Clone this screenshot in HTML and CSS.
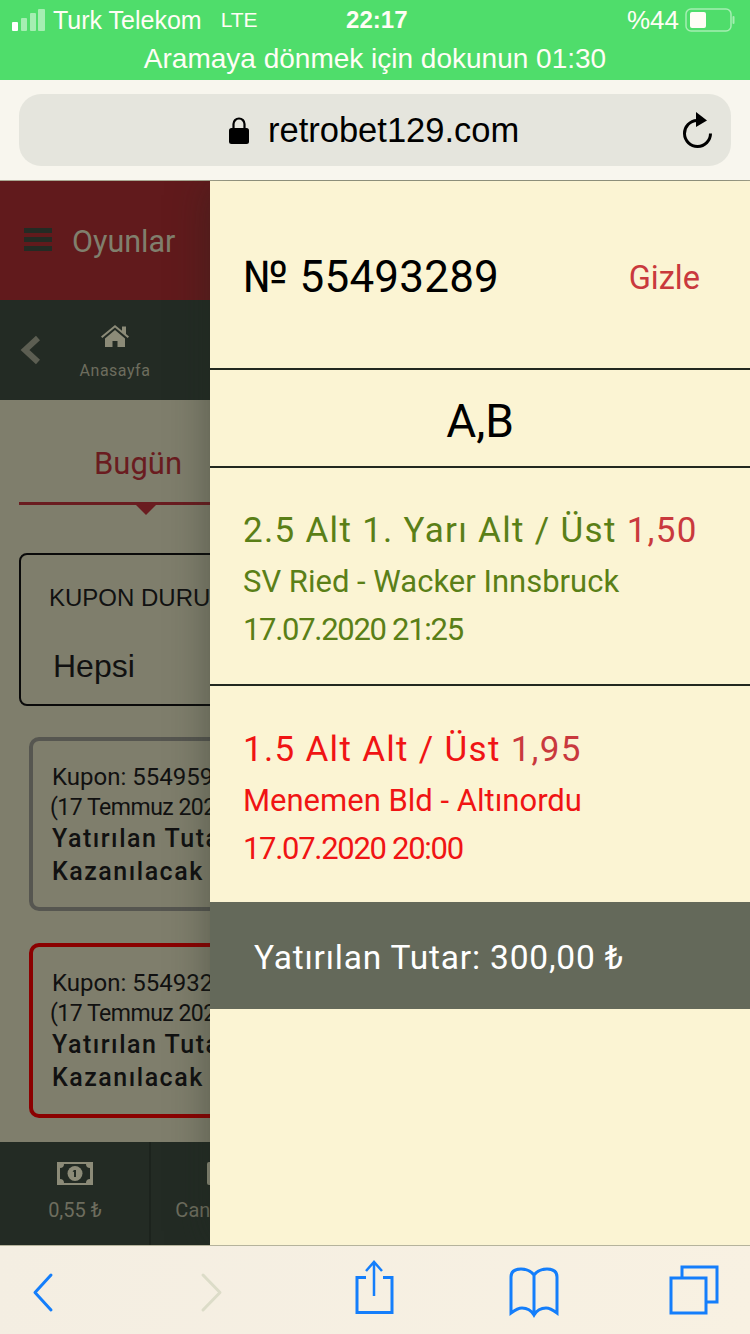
FILE: index.html
```html
<!DOCTYPE html>
<html>
<head>
	<title>Kupon</title>
	<link rel="stylesheet" href="styles.css">
</head>
<body>
	<div class="status">
		<div class="status-top">
			<div class="status-left">
				<svg class="signal" width="34" height="24" viewBox="0 0 34 24">
					<rect x="0" y="14" width="6" height="9" rx="1" fill="#fff"/>
					<rect x="9" y="10" width="6" height="13" rx="1" fill="#a5eeb2"/>
					<rect x="18" y="5" width="6" height="18" rx="1" fill="#a5eeb2"/>
					<rect x="26" y="1" width="7" height="22" rx="1" fill="#a5eeb2"/>
				</svg>
				<span class="carrier">Turk Telekom</span>
				<span class="network">LTE</span>
			</div>
			<div class="clock">22:17</div>
			<div class="status-right">
				<span>%44</span>
				<svg width="50" height="24" viewBox="0 0 50 24">
					<rect x="1" y="1" width="45" height="22" rx="5" fill="none" stroke="#a5eeb2" stroke-width="1.500"/>
					<rect x="5" y="4" width="16" height="16" rx="2" fill="#fffdf5"/>
					<rect x="47.500" y="8" width="2" height="8" rx="1" fill="#a5eeb2"/>
				</svg>
			</div>
		</div>
		<div class="status-call">Aramaya dönmek için dokunun 01:30</div>
	</div>

	<div class="urlbar">
		<div class="url-pill">
			<div class="url-text">
				<svg width="20" height="28" viewBox="0 0 20 28">
					<path d="M4.500 13V8a5.500 5.500 0 0 1 11 0v5" fill="none" stroke="#000" stroke-width="2.200"/>
					<rect x="0" y="12" width="20" height="16" rx="2.500" fill="#000"/>
				</svg>
				<span>retrobet129.com</span>
			</div>
			<svg class="reload" width="32" height="36" viewBox="0 0 32 36">
				<path d="M16 8.500a13 13 0 1 0 13.500 13" fill="none" stroke="#000" stroke-width="3"/>
				<path d="M15 0l11 8.500L15 15z" fill="#000"/>
			</svg>
		</div>
	</div>

	<div class="page">
		<div class="behind">
			<div class="top-bar">
				<div class="burger"><i></i><i></i><i></i></div>
				<span>Oyunlar</span>
			</div>
			<div class="nav-bar">
				<svg class="nav-back" width="20" height="30" viewBox="0 0 20 30">
					<path d="M18 3L5 15l13 12" fill="none" stroke="#5c5e52" stroke-width="6"/>
				</svg>
				<div class="nav-item">
					<svg width="30" height="24" viewBox="0 0 30 24">
						<path d="M1 12.500L15 1l7 5.800V2.500h4v7.600l3 2.400-1.300 1.500L15 3.500 2.300 14z" fill="#8c8b78"/>
						<path d="M5 14.500L15 6l10 8.500V23h-7.500v-6h-5v6H5z" fill="#8c8b78"/>
					</svg>
					<span>Anasayfa</span>
				</div>
			</div>
			<div class="content">
				<div class="tabs"><span>Bugün</span></div>
				<div class="filter">
					<div class="filter-label">KUPON DURUMU</div>
					<div class="filter-value">Hepsi</div>
				</div>
				<div class="coupon">
					<div class="coupon-id">Kupon: 55495915</div>
					<div class="coupon-date">(17 Temmuz 2020 21:20)</div>
					<div class="coupon-bold">Yatırılan Tutar: 100,00 ₺</div>
					<div class="coupon-bold coupon-win">Kazanılacak Tutar: 195,00 ₺</div>
				</div>
				<div class="coupon coupon-lost">
					<div class="coupon-id">Kupon: 55493289</div>
					<div class="coupon-date">(17 Temmuz 2020 19:40)</div>
					<div class="coupon-bold">Yatırılan Tutar: 300,00 ₺</div>
					<div class="coupon-bold coupon-win">Kazanılacak Tutar: 877,50 ₺</div>
				</div>
			</div>
			<div class="bottom-bar">
				<div class="bottom-cell">
					<svg width="36" height="24" viewBox="0 0 36 24">
						<rect width="36" height="23" fill="#8c8b78"/>
						<path d="M3 6a4 4 0 0 0 4-4h22a4 4 0 0 0 4 4v11a4 4 0 0 0-4 4H7a4 4 0 0 0-4-4z" fill="#232b24"/>
						<circle cx="18" cy="11.500" r="7.500" fill="#8c8b78"/>
						<path d="M17 8h2v7h-2zM15.500 9.500L17 8v2z" fill="#232b24"/>
					</svg>
					<span>0,55 ₺</span>
				</div>
				<div class="bottom-cell">
					<svg width="36" height="24" viewBox="0 0 36 24">
						<rect x="0" y="0" width="36" height="23" rx="2" fill="#8c8b78"/>
					</svg>
					<span>Canlı Bahis</span>
				</div>
			</div>
		</div>

		<div class="drawer">
			<div class="drawer-head">
				<span class="drawer-no">№ 55493289</span>
				<span class="drawer-hide">Gizle</span>
			</div>
			<div class="drawer-type">A,B</div>
			<div class="bet bet-won">
				<div class="bet-title">2.5 Alt 1. Yarı Alt / Üst <span class="bet-odds">1,50</span></div>
				<div class="bet-line">SV Ried - Wacker Innsbruck</div>
				<div class="bet-line bet-date">17.07.2020 21:25</div>
			</div>
			<div class="bet bet-lost">
				<div class="bet-title">1.5 Alt Alt / Üst <span class="bet-odds">1,95</span></div>
				<div class="bet-line">Menemen Bld - Altınordu</div>
				<div class="bet-line bet-date">17.07.2020 20:00</div>
			</div>
			<div class="drawer-total">Yatırılan Tutar: 300,00 ₺</div>
		</div>
	</div>

	<div class="toolbar">
		<svg width="750" height="89" viewBox="0 0 750 89" fill="none" stroke="#147efb" stroke-width="3">
			<path d="M51 29L35 46.500 51 64" stroke-linecap="round" stroke-linejoin="round"/>
			<path d="M203 29l17 17.500-17 17.500" stroke="#dcdcc8" stroke-linecap="round" stroke-linejoin="round"/>
			<path d="M366 31.500h-9v35h35v-35h-9"/>
			<path d="M374 50V16M366 25l8-9 8 9" stroke-width="2.500"/>
			<path d="M534 29c-4-5-8-6-13-6-7 0-10 3-10 8v36c4-3 7-5 11-5 5 0 9 2 12 7 3-5 7-7 12-7 4 0 7 2 11 5V31c0-5-3-8-10-8-5 0-9 1-13 6zM534 29v40"/>
			<path d="M671 32h35v35h-35zM682 32V21h35v35h-11"/>
		</svg>
	</div>
</body>
</html>
```

FILE: styles.css
```css
* {
	box-sizing: border-box;
}

html, body {
	margin: 0;
	padding: 0;
}

body {
	width: 750px;
	height: 1334px;
	overflow: hidden;
	font-family: Roboto, sans-serif;
	background-color: #fbf4d3;
}

/* ios bars */
.status {
	height: 80px;
	background-color: #4fdd6b;
	color: #fffdf5;
	font-family: "Liberation Sans", Arial, sans-serif;
	font-size: 25px;
}

.status-top {
	height: 40px;
	padding: 0 15px 0 12px;
	display: flex;
	align-items: center;
	justify-content: space-between;
}

.status-left, .status-right {
	display: flex;
	align-items: center;
}

.signal {
	margin-right: 7px;
}

.network {
	margin-left: 19px;
	font-size: 21px;
}

.clock {
	font-weight: bold;
	font-size: 24px;
	margin-left: -131px;
}

.status-right {
	font-size: 26px;
}

.status-right svg {
	margin-left: 6px;
}

.status-call {
	height: 40px;
	line-height: 38px;
	text-align: center;
	font-size: 28px;
}

.urlbar {
	position: relative;
	z-index: 2;
	height: 100px;
	padding: 14px 19px;
	background-color: #f8f6ee;
}

.url-pill {
	height: 72px;
	padding: 0 18px 0 210px;
	border-radius: 22px;
	background-color: #e5e5dd;
	display: flex;
	align-items: center;
	justify-content: space-between;
}

.url-text {
	display: flex;
	align-items: center;
	font-family: "Liberation Sans", Arial, sans-serif;
	font-size: 34.500px;
	color: #000;
}

.url-text svg {
	margin-right: 19px;
}

/* page */
.page {
	height: 1065px;
	display: flex;
	border-top: 1px solid #a9a892;
}

.behind {
	width: 210px;
	flex: none;
	overflow: hidden;
	display: flex;
	flex-direction: column;
	background-color: #7f7e6c;
}

.top-bar {
	width: 750px;
	height: 119px;
	padding: 2px 0 0 24px;
	display: flex;
	align-items: center;
	background-color: #611a1c;
	color: #807f6d;
	font-size: 30.500px;
}

.burger {
	width: 28px;
	margin-right: 20px;
}

.burger i {
	display: block;
	height: 5px;
	margin-bottom: 4px;
	background-color: #232b24;
}

.nav-bar {
	width: 750px;
	height: 100px;
	padding: 24px 0 0 20px;
	display: flex;
	align-items: flex-start;
	background-color: #232b24;
}

.nav-back {
	margin-top: 11px;
}

.nav-item {
	width: 110px;
	margin-left: 20px;
	display: flex;
	flex-direction: column;
	align-items: center;
	color: #6d6d5e;
	font-size: 16px;
	letter-spacing: 0.5px;
}

.nav-item svg {
	margin-bottom: 13px;
}

.content {
	flex: 1;
	width: 750px;
	padding: 0 0 0 19px;
}

.tabs {
	width: 300px;
	height: 105px;
	padding: 45px 0 0 75px;
	border-bottom: 3px solid #6a1c20;
	color: #6a1c20;
	font-size: 31px;
	position: relative;
}

.tabs:after {
	content: "";
	position: absolute;
	left: 117px;
	bottom: -13px;
	border-left: 10px solid transparent;
	border-right: 10px solid transparent;
	border-top: 10px solid #6a1c20;
}

.filter {
	width: 400px;
	height: 153px;
	margin-top: 48px;
	padding: 29px 0 0 28px;
	border: 2px solid #0a0a0a;
	border-radius: 8px;
	font-family: "Liberation Sans", Arial, sans-serif;
	color: #111;
}

.filter-label {
	font-size: 24px;
}

.filter-value {
	margin: 36px 0 0 4px;
	font-size: 32px;
}

.coupon {
	width: 400px;
	height: 174px;
	margin: 31px 0 0 10px;
	padding: 20px 0 0 19px;
	border: 4px solid #565650;
	border-radius: 10px;
	color: #111;
	font-size: 24px;
	white-space: nowrap;
}

.coupon-lost {
	margin-top: 32px;
	height: 175px;
	border-color: #8b0000;
}

.coupon-id {
	line-height: 32px;
}

.coupon-date {
	margin-left: -2px;
	line-height: 30px;
	font-size: 23px;
	letter-spacing: -0.5px;
}

.coupon-bold {
	line-height: 32px;
	font-size: 25px;
	font-weight: 500;
	letter-spacing: 1.5px;
}

.coupon-win {
	line-height: 34px;
}

.bottom-bar {
	width: 750px;
	height: 103px;
	display: flex;
	padding-left: 1px;
	background-color: #232b24;
}

.bottom-cell {
	width: 150px;
	padding-top: 20px;
	border-right: 2px solid #1c231d;
	display: flex;
	flex-direction: column;
	align-items: center;
	color: #6d6d5e;
	font-size: 20px;
}

.bottom-cell span {
	margin-top: 12px;
}

/* drawer with coupon details */
.drawer {
	position: relative;
	width: 540px;
	flex: none;
	background-color: #fbf4d3;
	box-shadow: 0 0 40px rgba(30, 40, 30, 0.4);
}

.drawer-head {
	height: 189px;
	padding: 4px 50px 0 33px;
	display: flex;
	align-items: center;
	justify-content: space-between;
	border-bottom: 2px solid #22281f;
}

.drawer-no {
	font-size: 44px;
	letter-spacing: 0.2px;
	color: #000;
}

.drawer-hide {
	margin-top: 3px;
	font-size: 32.500px;
	color: #c9393d;
}

.drawer-type {
	height: 98px;
	line-height: 102px;
	text-align: center;
	font-size: 46px;
	color: #000;
	border-bottom: 2px solid #22281f;
}

.bet {
	height: 218px;
	padding: 39px 0 0 33px;
	border-bottom: 2px solid #22281f;
	font-size: 31px;
}

.bet-won {
	color: #5a7f17;
}

.bet-lost {
	height: 216px;
	padding-top: 40px;
	color: #f01414;
	border-bottom: none;
}

.bet-title {
	line-height: 48px;
	font-size: 35px;
	letter-spacing: 1.3px;
}

.bet-odds {
	color: #c9393d;
}

.bet-line {
	line-height: 48px;
}

.bet-title + .bet-line {
	margin-top: 3px;
}

.bet-date {
	letter-spacing: -1.3px;
}

.drawer-total {
	height: 107px;
	line-height: 112px;
	padding-left: 44px;
	background-color: #64695a;
	color: #fff;
	font-size: 33.500px;
	letter-spacing: 0.8px;
}

.toolbar {
	position: relative;
	z-index: 2;
	height: 89px;
	border-top: 1px solid #b5b39c;
	background: linear-gradient(100deg, #f4eee2, #f8f1e2);
}

.toolbar svg {
	display: block;
}
```
